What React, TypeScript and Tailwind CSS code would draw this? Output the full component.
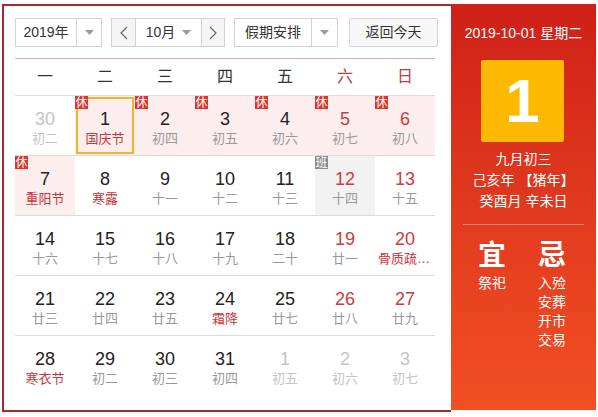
import React from 'react';

type Day = {
  d: number;
  l: string;
  other?: boolean; // 非本月
  fest?: boolean; // 节日/节气
  wk?: boolean; // 周末
  badge?: '休' | '班';
  sel?: boolean;
};

const weeks: Day[][] = [
  [
    { d: 30, l: '初二', other: true },
    { d: 1, l: '国庆节', fest: true, badge: '休', sel: true },
    { d: 2, l: '初四', badge: '休' },
    { d: 3, l: '初五', badge: '休' },
    { d: 4, l: '初六', badge: '休' },
    { d: 5, l: '初七', badge: '休', wk: true },
    { d: 6, l: '初八', badge: '休', wk: true },
  ],
  [
    { d: 7, l: '重阳节', fest: true, badge: '休' },
    { d: 8, l: '寒露', fest: true },
    { d: 9, l: '十一' },
    { d: 10, l: '十二' },
    { d: 11, l: '十三' },
    { d: 12, l: '十四', badge: '班', wk: true },
    { d: 13, l: '十五', wk: true },
  ],
  [
    { d: 14, l: '十六' },
    { d: 15, l: '十七' },
    { d: 16, l: '十八' },
    { d: 17, l: '十九' },
    { d: 18, l: '二十' },
    { d: 19, l: '廿一', wk: true },
    { d: 20, l: '骨质疏松日', fest: true, wk: true },
  ],
  [
    { d: 21, l: '廿三' },
    { d: 22, l: '廿四' },
    { d: 23, l: '廿五' },
    { d: 24, l: '霜降', fest: true },
    { d: 25, l: '廿七' },
    { d: 26, l: '廿八', wk: true },
    { d: 27, l: '廿九', wk: true },
  ],
  [
    { d: 28, l: '寒衣节', fest: true },
    { d: 29, l: '初二' },
    { d: 30, l: '初三' },
    { d: 31, l: '初四' },
    { d: 1, l: '初五', other: true },
    { d: 2, l: '初六', other: true },
    { d: 3, l: '初七', other: true },
  ],
];

const Caret = () => (
  <svg width="9" height="5" viewBox="0 0 9 5">
    <polygon points="0,0 9,0 4.5,5" fill="#999" />
  </svg>
);

const Chevron = ({ dir }: { dir: 'l' | 'r' }) => (
  <svg width="8" height="14" viewBox="0 0 8 14">
    <polyline
      points={dir === 'l' ? '7,1 1,7 7,13' : '1,1 7,7 1,13'}
      fill="none"
      stroke="#666"
      strokeWidth="1.2"
    />
  </svg>
);

const DayCell = ({ day }: { day: Day }) => {
  const bg =
    day.badge === '休' ? 'bg-[#fdeeee]' : day.badge === '班' ? 'bg-[#f2f2f2]' : 'bg-white';
  const numColor = day.other ? 'text-[#c4c4c4]' : day.wk ? 'text-[#cc3c3c]' : 'text-[#222]';
  const lunarColor = day.other ? 'text-[#c4c4c4]' : day.fest ? 'text-[#c9353a]' : 'text-[#999]';
  return (
    <div className={`relative h-full flex flex-col items-center pt-[12px] ${bg}`}>
      <div className={`text-[18px] leading-[22px] ${numColor}`}>{day.d}</div>
      <div className={`w-full px-[3px] text-center truncate text-[13px] leading-[18px] ${lunarColor}`}>
        {day.l}
      </div>
      {day.sel && <div className="absolute inset-[1px] border-2 border-[#f0b52a]" />}
      {day.badge && (
        <div
          className={`absolute left-0 top-0 w-[13px] h-[13px] flex items-center justify-center text-[12px] leading-none text-white ${
            day.badge === '休' ? 'bg-[#e0352e]' : 'bg-[#8c8c8c]'
          }`}
        >
          {day.badge}
        </div>
      )}
    </div>
  );
};

export default function App() {
  const heads = ['一', '二', '三', '四', '五', '六', '日'];
  return (
    <div className="pt-[4px] pl-[2px] font-['Liberation_Sans','Noto_Sans_CJK_SC',sans-serif]">
      <div className="flex w-[594px]">
        {/* 左侧日历 */}
        <div className="w-[449px] h-[408px] border-2 border-r-0 border-[#a8282c] bg-white pl-[11px] pr-[16px] pt-[12px]">
          <div className="flex h-[29px] text-[14px] text-[#333] w-[423px]">
            <div className="flex w-[87px] border border-[#d2d2d2] bg-white">
              <div className="flex-1 flex items-center justify-center">2019年</div>
              <div className="w-[25px] border-l border-[#d2d2d2] flex items-center justify-center">
                <Caret />
              </div>
            </div>
            <div className="ml-[9px] flex w-[114px] border border-[#d2d2d2] bg-white">
              <div className="w-[24px] bg-[#f5f5f5] border-r border-[#d2d2d2] flex items-center justify-center">
                <Chevron dir="l" />
              </div>
              <div className="flex-1 flex items-center justify-center gap-[7px]">
                <span>10月</span>
                <Caret />
              </div>
              <div className="w-[23px] bg-[#f5f5f5] border-l border-[#d2d2d2] flex items-center justify-center">
                <Chevron dir="r" />
              </div>
            </div>
            <div className="ml-[9px] flex w-[104px] border border-[#d2d2d2] bg-white">
              <div className="flex-1 flex items-center justify-center">假期安排</div>
              <div className="w-[26px] border-l border-[#d2d2d2] flex items-center justify-center">
                <Caret />
              </div>
            </div>
            <div className="ml-[11px] w-[89px] border border-[#d8d8d8] bg-[#f7f7f7] rounded-[2px] flex items-center justify-center">
              返回今天
            </div>
          </div>

          <div className="mt-[11px] w-[420px] h-[37px] border-t border-[#d7a9a7] grid grid-cols-7 items-center text-[16px]">
            {heads.map((h, i) => (
              <div key={h} className={`text-center ${i >= 5 ? 'text-[#b8403c]' : 'text-[#333]'}`}>
                {h}
              </div>
            ))}
          </div>

          {weeks.map((w, i) => (
            <div key={i} className="w-[420px] h-[60px] border-t border-[#dcdcdc] grid grid-cols-7">
              {w.map((d, j) => (
                <DayCell key={j} day={d} />
              ))}
            </div>
          ))}
        </div>

        {/* 右侧详情 */}
        <div className="w-[145px] h-[406px] bg-gradient-to-b from-[#cf1f18] to-[#f34f24] text-white flex flex-col items-center pt-[19px]">
          <div className="text-[14px] leading-[20px]">2019-10-01 星期二</div>
          <div className="mt-[17px] w-[83px] h-[82px] bg-[#fdb900] rounded-[2px] flex items-center justify-center text-[62px] leading-none font-bold -translate-x-[1px]">
            1
          </div>
          <div className="mt-[7px] text-[14px] leading-[21px] text-center">
            <div>九月初三</div>
            <div>己亥年 【猪年】</div>
            <div>癸酉月 辛未日</div>
          </div>
          <div className="mt-[12px] w-[121px] h-px bg-[#f2826f]" />
          <div className="mt-[13px] w-full pl-[11px] grid grid-cols-[60px_60px]">
            <div className="flex flex-col items-center">
              <div className="text-[28px] leading-[36px] font-bold">宜</div>
              <div className="text-[14px] leading-[19px]">祭祀</div>
            </div>
            <div className="flex flex-col items-center">
              <div className="text-[28px] leading-[36px] font-bold">忌</div>
              <div className="text-[14px] leading-[19px] text-center">
                <div>入殓</div>
                <div>安葬</div>
                <div>开市</div>
                <div>交易</div>
              </div>
            </div>
          </div>
        </div>
      </div>
    </div>
  );
}
